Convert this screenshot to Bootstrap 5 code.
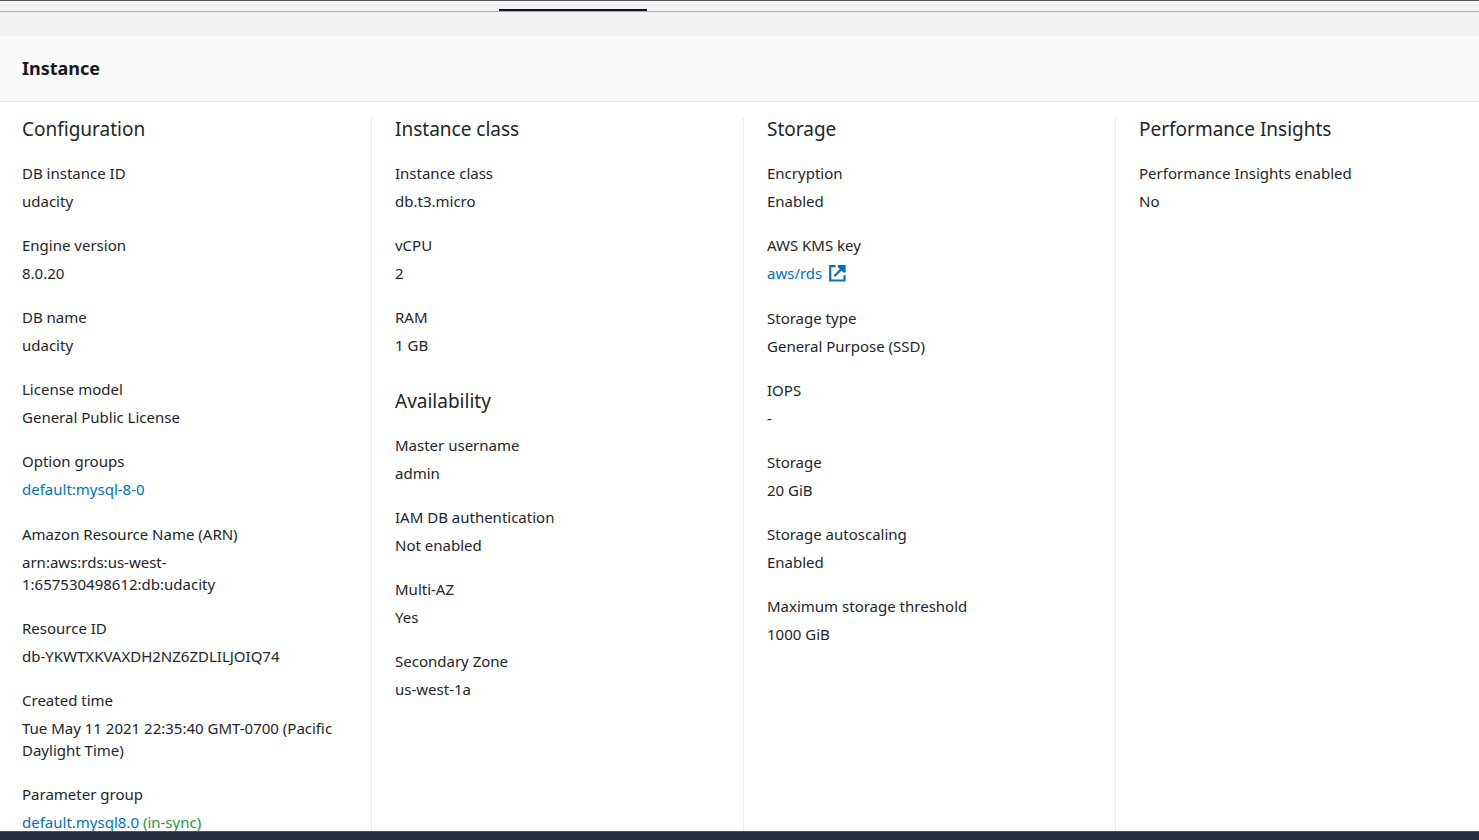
<!DOCTYPE html>
<html lang="en">
<head>
<meta charset="utf-8">
<meta name="viewport" content="width=device-width, initial-scale=1">
<title>Instance configuration</title>
<link href="https://cdn.jsdelivr.net/npm/bootstrap@5.3.0/dist/css/bootstrap.min.css" rel="stylesheet">
<style>
  body { font-family: "Noto Sans", sans-serif; font-size: 15px; line-height: 22px; color: #22262b; background: #f2f2f2; }
  a { color: #0073bb; text-decoration: none; }
  a:hover { text-decoration: underline; }
  .tab-strip { height: 12px; background: #f2f3f5; border-top: 1px solid #545358; border-bottom: 1px solid #aaadb0; }
  .tab-marker { width: 10%; height: 2px; margin-left: 499px; background: #16161a; }
  .panel-head { margin-top: 24px; padding: 21px 22px; background: #fafafa; border-bottom: 1px solid #e6e8e8; }
  .panel-head h2 { font-size: 18px; line-height: 23px; font-weight: 700; color: #16191f; }
  .panel-body { padding-top: 16px; background: #fff; }
  .detail-row { margin: 0 -8px 0 -1px; }
  .detail-col { padding: 0 23px; }
  .detail-col + .detail-col { border-left: 1px solid #eaeded; }
  .detail-col h3 { font-size: 19px; line-height: 22px; font-weight: 400; margin-bottom: 22px; }
  .detail-col dl + h3 { margin-top: 34px; }
  .detail-col dt { font-weight: 400; margin-bottom: 6px; }
  .detail-col dd { margin-bottom: 22px; }
  .detail-col .link-value { margin-bottom: 23px; }
  .detail-col dd:last-child { margin-bottom: 0; }
  .sync-state { color: #1d9a3c; }
  .open-icon { width: 18px; height: 18px; margin-left: 6px; }
  .page-foot { height: 9px; background: #232f3e; border-top: 1px solid #4a5158; }
</style>
</head>
<body class="vh-100 d-flex flex-column overflow-hidden">
<div class="tab-strip d-flex align-items-end flex-shrink-0"><div class="tab-marker"></div></div>
<main class="flex-fill d-flex flex-column overflow-hidden">
  <header class="panel-head flex-shrink-0"><h2 class="mb-0">Instance</h2></header>
  <div class="panel-body flex-fill d-flex flex-column overflow-hidden">
    <div class="row g-0 detail-row flex-fill">
      <section class="col-3 detail-col">
        <h3>Configuration</h3>
        <dl class="mb-0">
          <dt>DB instance ID</dt><dd>udacity</dd>
          <dt>Engine version</dt><dd>8.0.20</dd>
          <dt>DB name</dt><dd>udacity</dd>
          <dt>License model</dt><dd>General Public License</dd>
          <dt>Option groups</dt><dd class="link-value"><a href="#">default:mysql-8-0</a></dd>
          <dt>Amazon Resource Name (ARN)</dt><dd>arn:aws:rds:us-west-<wbr>1:657530498612:db:udacity</dd>
          <dt>Resource ID</dt><dd>db-YKWTXKVAXDH2NZ6ZDLILJOIQ74</dd>
          <dt>Created time</dt><dd>Tue May 11 2021 22:35:40 GMT-0700 (Pacific Daylight Time)</dd>
          <dt>Parameter group</dt><dd class="link-value"><a href="#">default.mysql8.0</a> <span class="sync-state">(in-sync)</span></dd>
        </dl>
      </section>
      <section class="col-3 detail-col">
        <h3>Instance class</h3>
        <dl class="mb-0">
          <dt>Instance class</dt><dd>db.t3.micro</dd>
          <dt>vCPU</dt><dd>2</dd>
          <dt>RAM</dt><dd>1 GB</dd>
        </dl>
        <h3>Availability</h3>
        <dl class="mb-0">
          <dt>Master username</dt><dd>admin</dd>
          <dt>IAM DB authentication</dt><dd>Not enabled</dd>
          <dt>Multi-AZ</dt><dd>Yes</dd>
          <dt>Secondary Zone</dt><dd>us-west-1a</dd>
        </dl>
      </section>
      <section class="col-3 detail-col">
        <h3>Storage</h3>
        <dl class="mb-0">
          <dt>Encryption</dt><dd>Enabled</dd>
          <dt>AWS KMS key</dt>
          <dd class="link-value"><a href="#" class="d-inline-flex align-items-center align-top">aws/rds<svg class="open-icon" viewBox="0 0 18 18" fill="none" stroke="currentColor" stroke-width="2.200" aria-hidden="true"><path d="M7.500 2.200H2.200v14.300h14.300v-5.300M6.300 12.200L15 3.500"/><path d="M10 1.100h7.600v7.400h-2.200L10 3.300z" fill="currentColor" stroke="none"/></svg></a></dd>
          <dt>Storage type</dt><dd>General Purpose (SSD)</dd>
          <dt>IOPS</dt><dd>-</dd>
          <dt>Storage</dt><dd>20 GiB</dd>
          <dt>Storage autoscaling</dt><dd>Enabled</dd>
          <dt>Maximum storage threshold</dt><dd>1000 GiB</dd>
        </dl>
      </section>
      <section class="col-3 detail-col">
        <h3>Performance Insights</h3>
        <dl class="mb-0">
          <dt>Performance Insights enabled</dt><dd>No</dd>
        </dl>
      </section>
    </div>
  </div>
</main>
<footer class="page-foot flex-shrink-0"></footer>
<script src="https://cdn.jsdelivr.net/npm/bootstrap@5.3.0/dist/js/bootstrap.bundle.min.js"></script>
</body>
</html>
